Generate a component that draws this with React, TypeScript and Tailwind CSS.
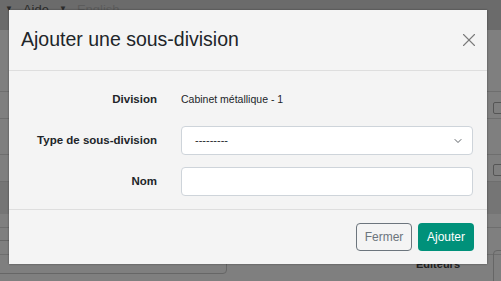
import { ChevronDown, X } from "lucide-react";

function Backdrop() {
  return (
    <div className="flex h-full flex-col bg-[#7f7f7f]">
      <div className="flex h-[30px] items-start gap-[10px] bg-[#6b6b6b] pl-[5px] text-[13px] leading-[14px] text-[#2c2c2c]">
        <span className="text-[8px] leading-[18px]">▼</span>
        <span className="pt-[3px]">Aide</span>
        <span className="text-[8px] leading-[18px]">▼</span>
        <span className="pt-[3px] text-[#5c5c5c]">English</span>
      </div>
      <div className="h-[62px] border-b border-[#6e6e6e]" />
      <div className="h-[27px] border-b border-[#6e6e6e]" />
      <div className="h-[36px] border-b border-[#6e6e6e]" />
      <div className="h-[27px] border-b border-[#6e6e6e]" />
      <div className="h-[32px] bg-[#757575]" />
      <div className="h-[14px] border-b border-[#6e6e6e]" />
      <div className="h-[27px] border-b border-[#6e6e6e]" />
    </div>
  );
}

export default function App() {
  return (
    <div className="relative h-[281px] w-[501px] overflow-hidden font-['Liberation_Sans',Arial,sans-serif]">
      <Backdrop />

      {/* bits of the page peeking out from under the dialog */}
      <div className="absolute left-[493px] top-[102px] h-[12px] w-[12px] rounded-[2px] border border-[#555]" />
      <div className="absolute left-[493px] top-[164px] h-[12px] w-[12px] rounded-[2px] border border-[#555]" />
      <div className="absolute left-[493px] top-[250px] h-[40px] w-[20px] rounded-[4px] border border-[#666]" />
      <div className="absolute left-[-10px] top-[240px] h-[34px] w-[237px] rounded-[4px] border border-[#666]" />
      <div className="absolute left-[416px] top-[256px] text-[11px] font-bold text-[#222]">Editeurs</div>

      <div className="absolute left-[9px] top-[10px] flex h-[254px] w-[478px] flex-col bg-[#f4f4f4] shadow-[0_0_2px_rgba(0,0,0,0.4)]">
        <div className="flex h-[61px] items-center justify-between border-b border-[#dedede] pl-[12px] pr-[7px]">
          <h1 className="text-[19.5px] text-[#212529]">Ajouter une sous-division</h1>
          <X className="h-[22px] w-[22px] text-[#7a7a7a]" strokeWidth={1.2} />
        </div>

        <div className="flex flex-1 flex-col pr-[14px] pt-[20px] text-[#212529]">
          <div className="flex h-[18px] items-center">
            <div className="w-[148px] text-right text-[11.5px] font-bold">Division</div>
            <div className="pl-[24px] text-[10.5px]">Cabinet métallique - 1</div>
          </div>
          <div className="mt-[17px] flex items-center">
            <div className="w-[148px] text-right text-[11.5px] font-bold">Type de sous-division</div>
            <div className="ml-[24px] flex h-[29px] flex-1 items-center justify-between rounded-[4px] border border-[#ced4da] bg-white pl-[13px] pr-[8px] text-[11px]">
              <span>---------</span>
              <ChevronDown className="h-[12px] w-[12px] text-[#343a40]" strokeWidth={1.6} />
            </div>
          </div>
          <div className="mt-[12px] flex items-center">
            <div className="w-[148px] text-right text-[11.5px] font-bold">Nom</div>
            <div className="ml-[24px] h-[29px] flex-1 rounded-[4px] border border-[#ced4da] bg-white" />
          </div>
        </div>

        <div className="flex h-[55px] items-center justify-end gap-[6px] border-t border-[#dedede] pr-[13px]">
          <button className="h-[28px] w-[56px] rounded-[4px] border border-[#6c757d] text-[12px] text-[#6c757d]">
            Fermer
          </button>
          <button className="h-[28px] w-[56px] rounded-[4px] bg-[#00917a] text-[12px] text-white">
            Ajouter
          </button>
        </div>
      </div>
    </div>
  );
}
